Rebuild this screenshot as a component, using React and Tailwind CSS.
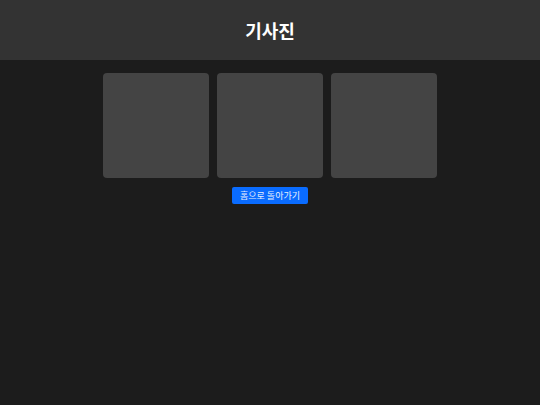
import React from "react";

export default function App() {
  const photos = [1, 2, 3];

  return (
    <div className="min-h-[405px] bg-[#1c1c1c] font-['Noto_Sans_CJK_KR',sans-serif]">
      <header className="h-[60px] bg-[#333333] flex items-center justify-center">
        <h1 className="text-white text-[18px] font-semibold">기사진</h1>
      </header>

      <main className="flex flex-col items-center pt-[13px]">
        <div className="flex gap-2">
          {photos.map((p) => (
            <div key={p} className="w-[106px] h-[105px] rounded bg-[#444444]" />
          ))}
        </div>

        <button className="mt-[9px] w-[76px] h-[17px] rounded-[2px] bg-[#0a6cff] text-[#e8eefc] text-[9px] leading-none">
          홈으로 돌아가기
        </button>
      </main>
    </div>
  );
}
